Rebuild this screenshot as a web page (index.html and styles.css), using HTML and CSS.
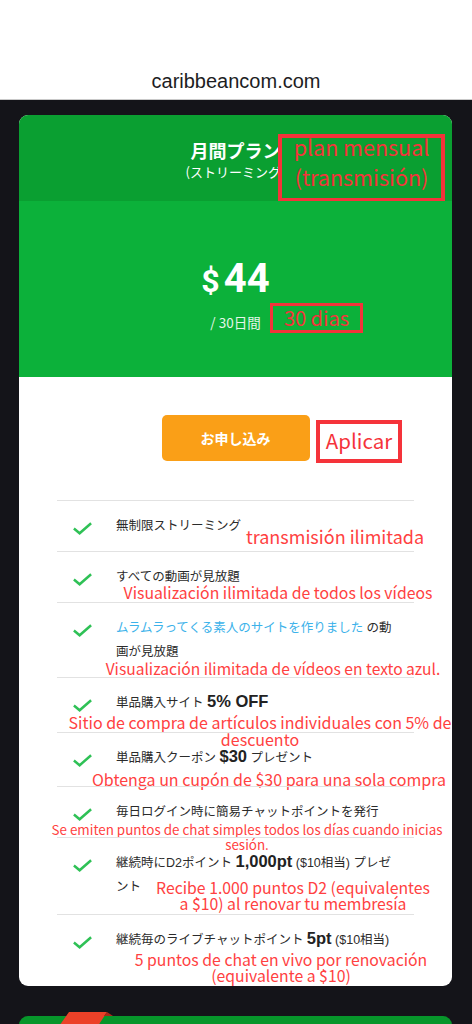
FILE: index.html
```html
<!DOCTYPE html>
<html>
<head>
    <title>caribbeancom.com</title>
    <link rel="stylesheet" href="styles.css">
</head>
<body>
    <header class="topbar">caribbeancom.com</header>
    <main class="page">
        <section class="plan">
            <div class="plan-head">
                <h2 class="plan-title">月間プラン</h2>
                <p class="plan-sub">(ストリーミング)</p>
                <span class="note-box note-head">plan mensual<br>(transmisión)</span>
            </div>
            <div class="plan-price">
                <p class="price"><span class="cur">$</span>44</p>
                <p class="period">/ 30日間</p>
                <span class="note-box note-days">30 dias</span>
            </div>
            <div class="plan-body">
                <div class="apply">
                    <a class="btn" href="#">お申し込み</a>
                    <span class="note-box note-apply">Aplicar</span>
                </div>
                <ul class="features">
                    <li class="feat">
                        <svg class="check" viewBox="0 0 22 14"><path d="M2 7.5 8 12.5 20 2"/></svg>
                        <p class="feat-text">無制限ストリーミング</p>
                        <span class="note n1">transmisión ilimitada</span>
                    </li>
                    <li class="feat">
                        <svg class="check" viewBox="0 0 22 14"><path d="M2 7.5 8 12.5 20 2"/></svg>
                        <p class="feat-text">すべての動画が見放題</p>
                        <span class="note n2">Visualización ilimitada de todos los vídeos</span>
                    </li>
                    <li class="feat">
                        <svg class="check" viewBox="0 0 22 14"><path d="M2 7.5 8 12.5 20 2"/></svg>
                        <p class="feat-text"><a class="link" href="#">ムラムラってくる素人のサイトを作りました</a> の動画が見放題</p>
                        <span class="note n3">Visualización ilimitada de vídeos en texto azul.</span>
                    </li>
                    <li class="feat feat-4">
                        <svg class="check" viewBox="0 0 22 14"><path d="M2 7.5 8 12.5 20 2"/></svg>
                        <p class="feat-text">単品購入サイト <b>5% OFF</b></p>
                        <span class="note n4">Sitio de compra de artículos individuales con 5% de<br>descuento</span>
                    </li>
                    <li class="feat feat-5">
                        <svg class="check" viewBox="0 0 22 14"><path d="M2 7.5 8 12.5 20 2"/></svg>
                        <p class="feat-text">単品購入クーポン <b>$30</b> プレゼント</p>
                        <span class="note n5">Obtenga un cupón de $30 para una sola compra</span>
                    </li>
                    <li class="feat">
                        <svg class="check" viewBox="0 0 22 14"><path d="M2 7.5 8 12.5 20 2"/></svg>
                        <p class="feat-text">毎日ログイン時に簡易チャットポイントを発行</p>
                        <span class="note n6">Se emiten puntos de chat simples todos los días cuando inicias<br>sesión.</span>
                    </li>
                    <li class="feat feat-7">
                        <svg class="check" viewBox="0 0 22 14"><path d="M2 7.5 8 12.5 20 2"/></svg>
                        <p class="feat-text">継続時にD2ポイント <b>1,000pt</b> ($10相当) プレゼント</p>
                        <span class="note n7">Recibe 1.000 puntos D2 (equivalentes<br>a $10) al renovar tu membresía</span>
                    </li>
                    <li class="feat">
                        <svg class="check" viewBox="0 0 22 14"><path d="M2 7.5 8 12.5 20 2"/></svg>
                        <p class="feat-text">継続毎のライブチャットポイント <b>5pt</b> ($10相当)</p>
                        <span class="note n8">5 puntos de chat en vivo por renovación<br>(equivalente a $10)</span>
                    </li>
                </ul>
            </div>
        </section>
        <section class="plan-next">
            <svg class="ribbon" viewBox="0 0 57 17" width="57" height="17">
                <polygon points="0,17 12,0 50,0 39,17" fill="#ec4128"/>
                <polygon points="50,0 56,4 47,4" fill="#a82a18"/>
            </svg>
        </section>
    </main>
</body>
</html>
```

FILE: styles.css
```css
* {
    padding: 0;
    margin: 0;
    box-sizing: border-box;
}
body {
    font-family: "Liberation Sans", "Noto Sans CJK JP", sans-serif;
    background-color: #141419;
    color: #333;
}
.topbar {
    height: 100px;
    padding-top: 68px;
    background-color: #ffffff;
    border-bottom: 1px solid #c9c9c9;
    text-align: center;
    font-size: 20px;
    line-height: 26px;
    color: #1d1d1f;
}
.page {
    display: flex;
    flex-direction: column;
    gap: 30px;
    padding: 15px 20px 0 19px;
}
.plan {
    background-color: #ffffff;
    border-radius: 9px;
    overflow: hidden;
}

/* header + price */
.plan-head {
    position: relative;
    padding: 23px 0 19px;
    background-color: #0a9f31;
    color: #fff;
    text-align: center;
    font-family: "Noto Sans CJK JP", sans-serif;
}
.plan-title {
    font-size: 18px;
    line-height: 24px;
    font-weight: bold;
}
.plan-sub {
    font-size: 13px;
    line-height: 20px;
}
.plan-price {
    position: relative;
    height: 176px;
    padding-top: 56px;
    background-color: #0cb13a;
    color: #fff;
    text-align: center;
}
.price {
    font-family: Roboto, sans-serif;
    font-weight: bold;
    font-size: 40px;
    line-height: 44px;
}
.cur {
    font-size: 32px;
    margin-right: 4px;
}
.period {
    margin-top: 9px;
    font-family: "Noto Sans CJK JP", sans-serif;
    font-size: 13.5px;
    line-height: 20px;
    color: #e6f6ea;
}

/* red annotation boxes */
.note-box {
    position: absolute;
    display: flex;
    align-items: center;
    justify-content: center;
    border: 4px solid #f5333a;
    color: #f5333a;
    font-family: "Noto Sans CJK JP", sans-serif;
    text-align: center;
    white-space: nowrap;
}
.note-head {
    left: 259px;
    top: 19px;
    width: 167px;
    height: 68px;
    padding-bottom: 12px;
    background-color: #0a9f31;
    font-size: 21.5px;
    line-height: 30px;
}
.note-days {
    left: 251px;
    top: 102px;
    width: 93px;
    height: 30px;
    border-width: 3.5px;
    background-color: #0cb13a;
    font-size: 20px;
    line-height: 22px;
}
.note-apply {
    left: 297px;
    top: 5px;
    width: 86px;
    height: 43px;
    padding-bottom: 3px;
    background-color: #fff;
    font-size: 20.5px;
    line-height: 30px;
}

/* body */
.plan-body {
    padding: 38px 0 21px;
}
.apply {
    position: relative;
    display: flex;
    justify-content: center;
}
.btn {
    display: flex;
    align-items: center;
    justify-content: center;
    width: 148px;
    height: 46px;
    border-radius: 5px;
    background-color: #fa9f17;
    color: #fff;
    font-family: "Noto Sans CJK JP", sans-serif;
    font-weight: bold;
    font-size: 14px;
    text-decoration: none;
}
.features {
    list-style: none;
    margin: 39px 38px 0;
}
.feat {
    position: relative;
    display: flex;
    align-items: flex-start;
    gap: 23px;
    padding: 13px 13px 13px 15px;
    border-top: 1px solid #e2e2e2;
    font-size: 12.5px;
    line-height: 24px;
}
.feat-4 {
    padding-bottom: 17px;
}
.feat-5 {
    padding-bottom: 16px;
}
.feat-7 {
    padding-bottom: 15px;
}
.check {
    flex: none;
    width: 21px;
    height: 14px;
    margin-top: 7px;
    fill: none;
    stroke: #2fc156;
    stroke-width: 2.6;
}
.feat-text {
    flex: 1;
    color: #2b2b2b;
}
.feat-text b {
    font-size: 16.5px;
    line-height: 1;
    color: #222;
}
.link {
    color: #3cb2ea;
    text-decoration: none;
}
.note {
    position: absolute;
    transform: translateX(-50%);
    color: #ff4141;
    font-family: "Noto Sans CJK JP", sans-serif;
    font-size: 16px;
    line-height: 20px;
    text-align: center;
    white-space: nowrap;
}
.n1 { left: 278px; top: 25px; font-size: 18px; }
.n2 { left: 221px; top: 31px; font-size: 15.8px; }
.n3 { left: 216px; top: 55px; font-size: 15.6px; }
.n4 { left: 203px; top: 36px; line-height: 17px; }
.n5 { left: 212px; top: 36px; }
.n6 { left: 190px; top: 35px; font-size: 13.4px; line-height: 15px; }
.n7 { left: 236px; top: 42px; font-size: 15.8px; line-height: 16px; }
.n8 { left: 224px; top: 37px; font-size: 15.8px; line-height: 16px; }

/* next plan peeking in */
.plan-next {
    position: relative;
    height: 60px;
    background-color: #07962b;
    border-radius: 9px;
}
.ribbon {
    position: absolute;
    left: 38px;
    top: -4px;
}
```
